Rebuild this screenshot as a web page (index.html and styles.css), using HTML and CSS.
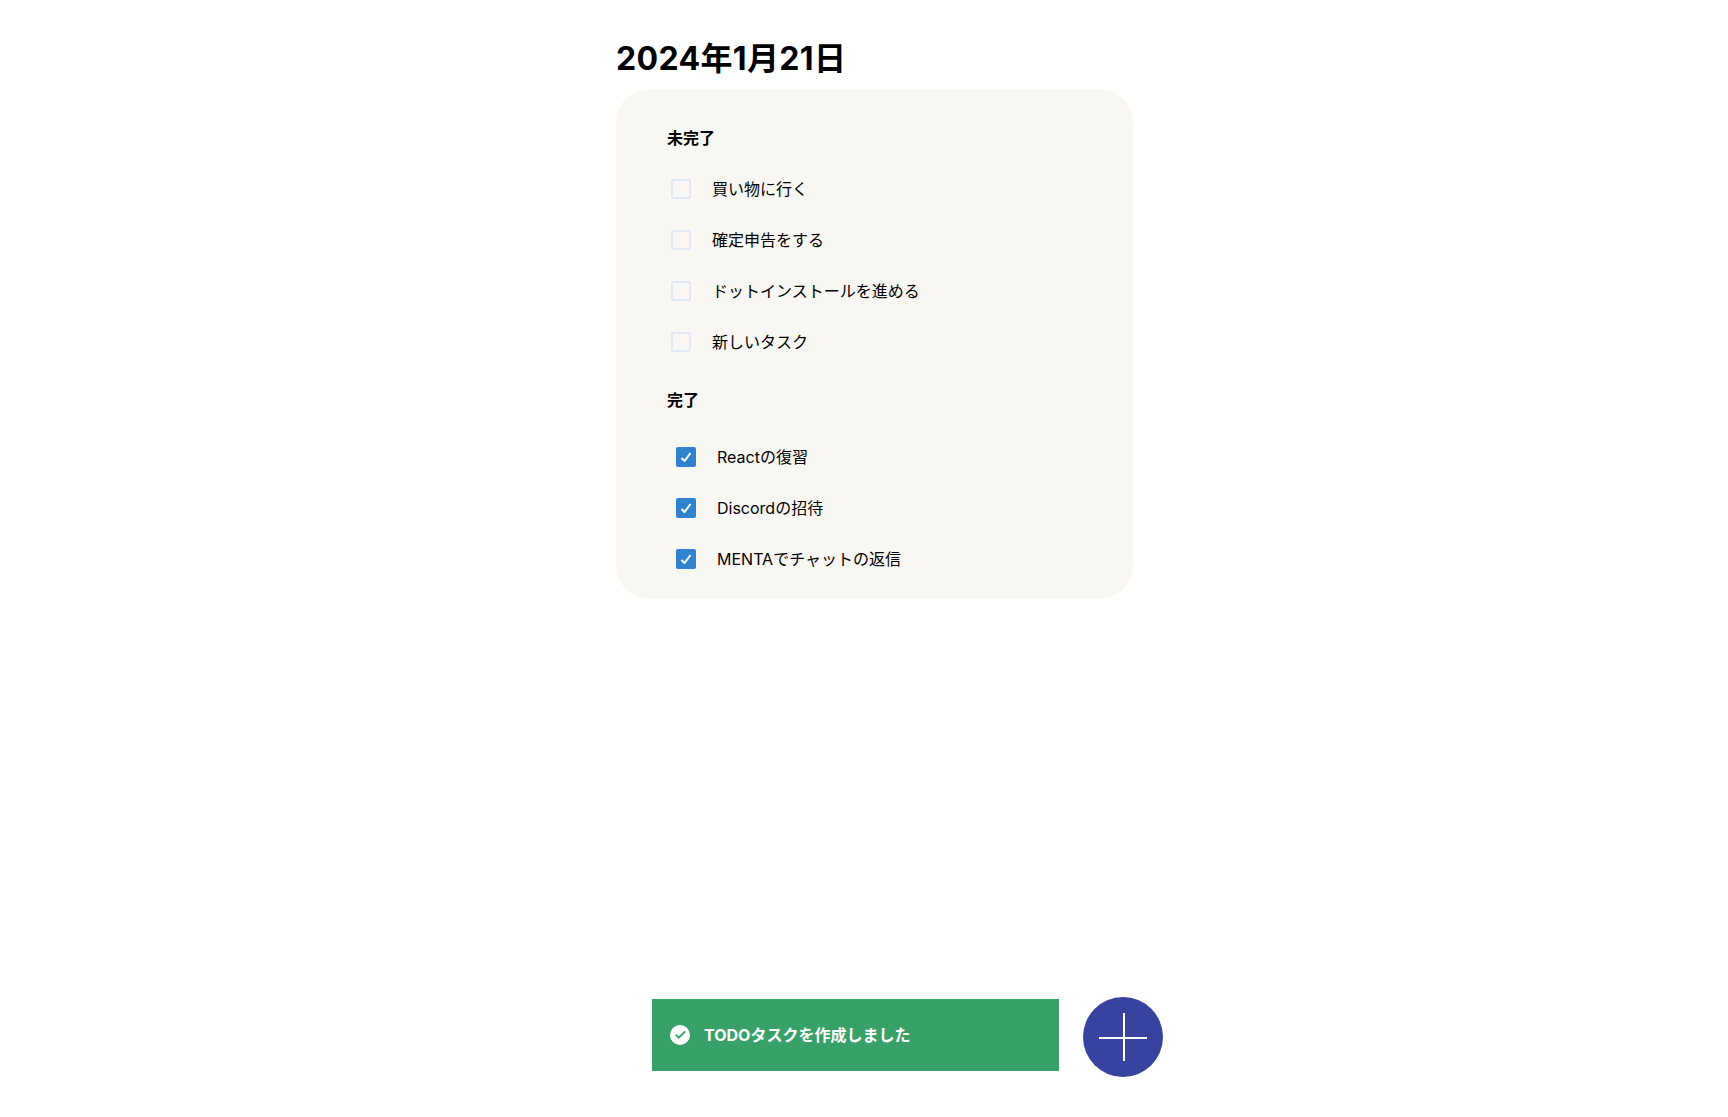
FILE: index.html
```html
<!DOCTYPE html>
<html lang="ja">
<head>
<meta charset="utf-8">
<title>TODO</title>
<link rel="stylesheet" href="styles.css">
</head>
<body>
<div class="page">
  <main class="content">
    <h1 class="date">2024年1月21日</h1>
    <section class="card">
      <h2 class="heading">未完了</h2>
      <ul class="tasks">
        <li class="task"><span class="box"></span><span>買い物に行く</span></li>
        <li class="task"><span class="box"></span><span>確定申告をする</span></li>
        <li class="task"><span class="box"></span><span>ドットインストールを進める</span></li>
        <li class="task"><span class="box"></span><span>新しいタスク</span></li>
      </ul>
      <h2 class="heading">完了</h2>
      <ul class="tasks tasks-done">
        <li class="task"><span class="box box-checked"><svg class="check" viewBox="0 0 12 10"><polyline points="1.5 6 4.5 9 10.5 1"/></svg></span><span>Reactの復習</span></li>
        <li class="task"><span class="box box-checked"><svg class="check" viewBox="0 0 12 10"><polyline points="1.5 6 4.5 9 10.5 1"/></svg></span><span>Discordの招待</span></li>
        <li class="task"><span class="box box-checked"><svg class="check" viewBox="0 0 12 10"><polyline points="1.5 6 4.5 9 10.5 1"/></svg></span><span>MENTAでチャットの返信</span></li>
      </ul>
    </section>
  </main>
  <footer class="footer">
    <div class="toast" role="status">
      <svg class="toast-icon" viewBox="0 0 20 20"><circle cx="10" cy="10" r="10"/><polyline class="toast-check" points="5.8 9.6 8.8 12.6 15.2 6.4"/></svg>
      <span>TODOタスクを作成しました</span>
    </div>
    <button class="add" type="button" aria-label="追加">
      <svg class="plus" viewBox="0 0 80 80"><path d="M16 41H64M41 16V64"/></svg>
    </button>
  </footer>
</div>
</body>
</html>
```
FILE: styles.css
```css
* {
  box-sizing: border-box;
  margin: 0;
  padding: 0;
}

body {
  background: #fff;
  color: #000;
  font-family: Inter, "Noto Sans CJK JP", sans-serif;
  font-size: 16px;
  line-height: 24px;
}

.page {
  display: flex;
  flex-direction: column;
  justify-content: space-between;
  height: 1117px;
  padding: 35px 0 40px;
}

.content {
  width: 517px;
  margin-left: 616px;
}

.date {
  height: 55px;
  font-size: 32px;
  font-weight: 700;
  letter-spacing: 0.35px;
  line-height: 48px;
  white-space: nowrap;
}

.card {
  height: 508px;
  padding: 36px 51px 0;
  border-radius: 32px;
  background: #f8f7f3;
}

.heading {
  font-size: 16px;
  font-weight: 700;
  line-height: 24px;
}

.tasks {
  display: flex;
  flex-direction: column;
  gap: 27px;
  padding: 27px 0 34px 4px;
  list-style: none;
}

.tasks-done {
  padding: 33px 0 0 9px;
}

.task {
  display: flex;
  align-items: center;
  gap: 21px;
  height: 24px;
  white-space: nowrap;
}

.box {
  display: flex;
  align-items: center;
  justify-content: center;
  width: 20px;
  height: 20px;
  border: 2px solid #e1e8f2;
  border-radius: 2px;
}

.box-checked {
  border-color: #3182ce;
  background: #3182ce;
}

.check {
  width: 12px;
  height: 10px;
  fill: none;
  stroke: #fff;
  stroke-width: 2;
}

.footer {
  display: flex;
  align-items: flex-start;
  gap: 24px;
  height: 80px;
  margin-left: 652px;
}

.toast {
  display: flex;
  align-items: center;
  gap: 14px;
  width: 407px;
  height: 72px;
  margin-top: 2px;
  padding: 0 18px;
  background: #38a169;
  color: #fff;
  font-weight: 700;
}

.toast-icon {
  width: 20px;
  height: 20px;
  fill: #fff;
}

.toast-check {
  fill: none;
  stroke: #38a169;
  stroke-width: 1.9;
}

.add {
  width: 80px;
  height: 80px;
  border: 0;
  border-radius: 50%;
  background: #38439f;
}

.plus {
  display: block;
  width: 80px;
  height: 80px;
  fill: none;
  stroke: #fff;
  stroke-width: 2;
}
```
